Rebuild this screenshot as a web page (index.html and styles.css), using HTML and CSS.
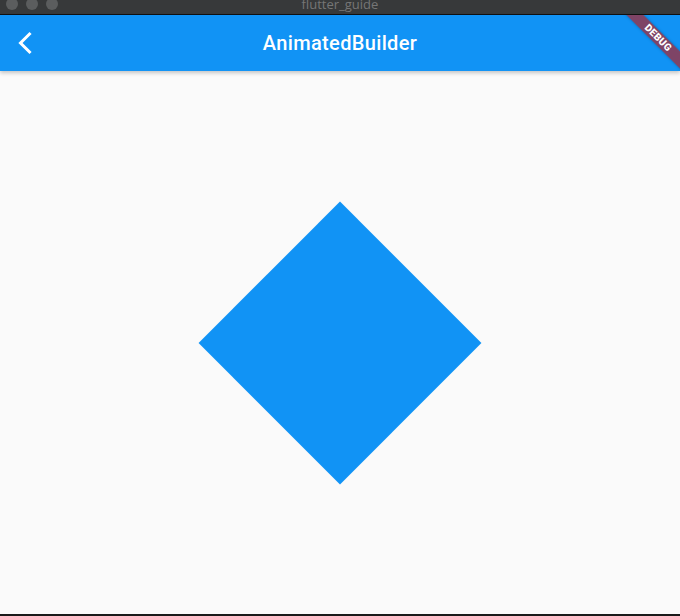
FILE: index.html
```html
<!DOCTYPE html>
<html>
<head>
<meta charset="utf-8">
<link rel="stylesheet" href="styles.css">
</head>
<body>
<div class="window">
  <div class="titlebar">
    <div class="lights">
      <span class="light"></span>
      <span class="light"></span>
      <span class="light"></span>
    </div>
    <div class="wintitle">flutter_guide</div>
  </div>
  <div class="appbar">
    <div class="back">
      <svg width="20" height="24" viewBox="0 0 20 24">
        <polyline points="13.5,3 4.5,12 13.5,21" fill="none" stroke="#fff" stroke-width="3" stroke-linecap="square" stroke-linejoin="miter"/>
      </svg>
    </div>
    <div class="title">AnimatedBuilder</div>
    <div class="banner-clip">
      <div class="banner">DEBUG</div>
    </div>
  </div>
  <div class="content">
    <div class="diamond"></div>
  </div>
  <div class="bottomline"></div>
</div>
</body>
</html>
```
FILE: styles.css
```css
html, body {
  margin: 0;
  padding: 0;
  background: #fafafa;
}
.window {
  width: 680px;
  height: 616px;
  display: flex;
  flex-direction: column;
  overflow: hidden;
  font-family: Roboto, "Liberation Sans", sans-serif;
}
.titlebar {
  height: 14px;
  flex: none;
  background: #37393a;
  border-bottom: 1px solid #111;
  position: relative;
  overflow: hidden;
}
.lights {
  display: flex;
  gap: 8px;
  padding-left: 6px;
  margin-top: -2px;
}
.light {
  width: 12px;
  height: 12px;
  border-radius: 50%;
  background: #5b5d5e;
}
.wintitle {
  position: absolute;
  left: 0;
  right: 0;
  top: -4px;
  text-align: center;
  color: #767676;
  font-size: 13px;
  line-height: 16px;
  font-family: "Open Sans", "Liberation Sans", sans-serif;
}
.appbar {
  height: 56px;
  flex: none;
  background: #1193f5;
  position: relative;
  display: flex;
  align-items: center;
  justify-content: center;
  box-shadow: 0 2px 4px rgba(0, 0, 0, 0.22);
  z-index: 1;
}
.back {
  position: absolute;
  left: 16px;
  top: 16px;
  width: 20px;
  height: 24px;
}
.back svg {
  display: block;
}
.title {
  color: #fff;
  font-size: 20px;
  font-weight: 500;
  letter-spacing: 0.35px;
}
.banner-clip {
  position: absolute;
  right: 0;
  top: 0;
  width: 60px;
  height: 56px;
  overflow: hidden;
}
.banner {
  position: absolute;
  width: 100px;
  height: 12px;
  left: -12.5px;
  top: 16.5px;
  transform-origin: 50% 50%;
  transform: rotate(45deg);
  background: rgba(183, 28, 28, 0.66);
  color: #fff;
  font-size: 10px;
  font-weight: 900;
  line-height: 12px;
  text-align: center;
  letter-spacing: 0.3px;
  box-shadow: 0 0 3px rgba(0, 0, 0, 0.3);
}
.content {
  flex: 1;
  display: flex;
  align-items: center;
  justify-content: center;
  background: #fafafa;
}
.diamond {
  width: 200px;
  height: 200px;
  background: #1193f5;
  transform: rotate(45deg);
}
.bottomline {
  height: 2px;
  flex: none;
  background: #1a1a1a;
}
```
